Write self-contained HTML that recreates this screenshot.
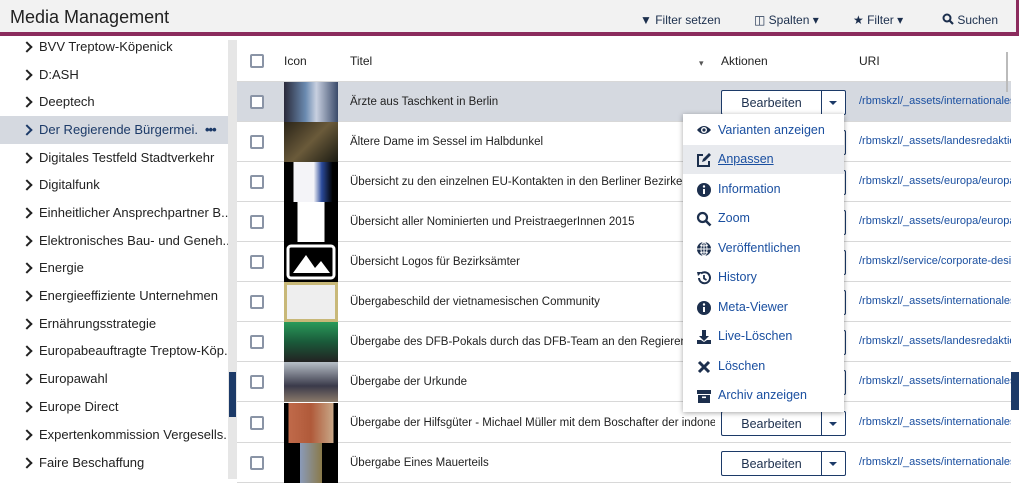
<!DOCTYPE html><html><head><meta charset="utf-8"><style>
*{box-sizing:border-box;margin:0;padding:0}
body{width:1019px;height:479px;overflow:hidden;background:#fff;font-family:"Liberation Sans",sans-serif;color:#222;position:relative}
.hdr{position:absolute;left:0;top:0;width:1019px;height:36px;background:#f2f2f2;border-bottom:4px solid #8b2b5d;border-right:3px solid #8b2b5d}
.hdr .t{position:absolute;left:10px;top:7px;font-size:18px;color:#222}
.hdr .b{position:absolute;top:13px;font-size:12px;color:#1c2f4d}
.side{position:absolute;left:0;top:40px;width:228px;height:439px;background:#fff;overflow:hidden}
.si{position:absolute;left:0;width:228px;height:28px;font-size:13px;line-height:28px;padding-left:39px;white-space:nowrap;color:#222;overflow:hidden}
.si:before{content:"";position:absolute;left:23px;top:10px;width:6px;height:6px;border-right:2px solid #222;border-top:2px solid #222;transform:rotate(45deg)}
.si.sel{background:#d5d9e0;color:#1c3a68}
.si.sel:before{border-color:#1c3a68}
.strip{position:absolute;left:228px;top:40px;width:9px;height:439px;background:#e6e6e6}
.tab{position:absolute;left:229px;top:372px;width:7px;height:45px;background:#1c3a68}
.tab2{position:absolute;left:1011px;top:372px;width:8px;height:38px;background:#1c3a68}
.row{position:absolute;left:237px;width:774px;height:40px;border-bottom:1px solid #d8d8d8;font-size:11.5px}
.cb{position:absolute;left:13px;top:13px;width:14px;height:14px;border:2px solid #8a94a6;border-radius:2px;background:#fff}
.th{position:absolute;left:47px;top:0;width:54px;height:40px;background:#000}
.tt{position:absolute;left:113px;top:11px;line-height:18px;white-space:nowrap;max-width:365px;overflow:hidden}
.btn{position:absolute;left:484px;top:8px;width:125px;height:25px;border:1px solid #1c3a68;border-radius:2px;background:#fff;font-size:12.5px}
.btn span{position:absolute;left:0;width:99px;text-align:center;top:5px;color:#1c2f4d}
.btn i{position:absolute;left:99px;top:0;height:23px;border-left:1px solid #1c3a68;width:24px}
.btn i:after{content:"";position:absolute;left:7px;top:10px;border:4px solid transparent;border-top:4px solid #1c3a68}
.uri{position:absolute;left:622px;top:13px;color:#1a4fa0;white-space:nowrap;font-size:11px;width:152px;overflow:hidden}
.menu{position:absolute;left:683px;top:114px;width:161px;height:298px;background:#fff;box-shadow:0 1px 5px rgba(0,0,0,.35)}
.mi{position:absolute;left:0;width:161px;height:29px;font-size:12.5px;color:#1a4fa0;padding-left:35px;line-height:29px}
.mi svg{position:absolute;left:13px;top:7px}
</style></head><body>
<div class="hdr"><div class="t">Media Management</div>
<div class="b" style="left:640px">▼ Filter setzen</div>
<div class="b" style="left:754px">◫ Spalten ▾</div>
<div class="b" style="left:853px">★ Filter ▾</div>
<div class="b" style="left:942px"><svg width="12" height="12" style="vertical-align:-1px"><circle cx="5" cy="5" r="3.5" fill="none" stroke="#1c2f4d" stroke-width="2"/><path d="M7.5 7.5L11 11" stroke="#1c2f4d" stroke-width="2.2"/></svg> Suchen</div></div>
<div class="side">
<div class="si" style="top:-7px">BVV Treptow-Köpenick</div>
<div class="si" style="top:21px">D:ASH</div>
<div class="si" style="top:48px">Deeptech</div>
<div class="si sel" style="top:76px"><span style="display:inline-block;width:158px;overflow:hidden;vertical-align:top">Der Regierende Bürgermei...</span><b style="position:absolute;left:205px;letter-spacing:-1px">•••</b></div>
<div class="si" style="top:104px">Digitales Testfeld Stadtverkehr</div>
<div class="si" style="top:131px">Digitalfunk</div>
<div class="si" style="top:159px">Einheitlicher Ansprechpartner B...</div>
<div class="si" style="top:187px">Elektronisches Bau- und Geneh...</div>
<div class="si" style="top:214px">Energie</div>
<div class="si" style="top:242px">Energieeffiziente Unternehmen</div>
<div class="si" style="top:270px">Ernährungsstrategie</div>
<div class="si" style="top:297px">Europabeauftragte Treptow-Köp...</div>
<div class="si" style="top:325px">Europawahl</div>
<div class="si" style="top:353px">Europe Direct</div>
<div class="si" style="top:381px">Expertenkommission Vergesells...</div>
<div class="si" style="top:409px">Faire Beschaffung</div>
</div>
<div class="strip"></div><div class="tab"></div><div class="tab2"></div>
<div class="row" style="top:41px;height:41px;font-size:12px"><div class="cb" style="top:13px"></div><div class="tt" style="left:47px">Icon</div><div class="tt">Titel</div><div class="tt" style="left:462px;font-size:9px;top:13px;color:#555">▾</div><div class="tt" style="left:484px">Aktionen</div><div class="tt" style="left:622px">URI</div></div>
<div class="row" style="top:82px;background:#d5d9e0"><div class="cb"></div><div class="th" style="background:linear-gradient(90deg,#2a2a3a,#6a8ab0 40%,#c8d0e0 60%,#3a4a6a)"></div><div class="tt">Ärzte aus Taschkent in Berlin</div><div class="btn"><span>Bearbeiten</span><i></i></div><div class="uri">/rbmskzl/_assets/internationales</div></div>
<div class="row" style="top:122px"><div class="cb"></div><div class="th" style="background:linear-gradient(135deg,#2a2418,#6a5a3a 50%,#1a1a12)"></div><div class="tt">Ältere Dame im Sessel im Halbdunkel</div><div class="btn"><span>Bearbeiten</span><i></i></div><div class="uri">/rbmskzl/_assets/landesredaktion</div></div>
<div class="row" style="top:162px"><div class="cb"></div><div class="th" style="background:linear-gradient(90deg,#000 18%,#f4f4f8 18%,#f4f4f8 55%,#2a4a9a 70%,#000 90%)"></div><div class="tt">Übersicht zu den einzelnen EU-Kontakten in den Berliner Bezirken</div><div class="btn"><span>Bearbeiten</span><i></i></div><div class="uri">/rbmskzl/_assets/europa/europa</div></div>
<div class="row" style="top:202px"><div class="cb"></div><div class="th" style="background:linear-gradient(90deg,#000 25%,#fff 25%,#fff 75%,#000 75%)"></div><div class="tt">Übersicht aller Nominierten und PreistraegerInnen 2015</div><div class="btn"><span>Bearbeiten</span><i></i></div><div class="uri">/rbmskzl/_assets/europa/europa</div></div>
<div class="row" style="top:242px"><div class="cb"></div><div class="th"><svg width="54" height="40"><rect x="4" y="4" width="46" height="32" rx="3" fill="none" stroke="#fff" stroke-width="3"/><path d="M9 31 L22 13 L31 26 L37 19 L46 31Z" fill="#fff"/></svg></div><div class="tt">Übersicht Logos für Bezirksämter</div><div class="btn"><span>Bearbeiten</span><i></i></div><div class="uri">/rbmskzl/service/corporate-desi</div></div>
<div class="row" style="top:282px"><div class="cb"></div><div class="th" style="background:#c8b878;padding:3px"><div style="background:#eee;width:100%;height:100%"></div></div><div class="tt">Übergabeschild der vietnamesischen Community</div><div class="btn"><span>Bearbeiten</span><i></i></div><div class="uri">/rbmskzl/_assets/internationales</div></div>
<div class="row" style="top:322px"><div class="cb"></div><div class="th" style="background:linear-gradient(180deg,#2a9a5a,#1a5a3a 50%,#222)"></div><div class="tt">Übergabe des DFB-Pokals durch das DFB-Team an den Regierenden</div><div class="btn"><span>Bearbeiten</span><i></i></div><div class="uri">/rbmskzl/_assets/landesredaktion</div></div>
<div class="row" style="top:362px"><div class="cb"></div><div class="th" style="background:linear-gradient(180deg,#b8c0c8,#3a3a4a 60%,#8a7a6a)"></div><div class="tt">Übergabe der Urkunde</div><div class="btn"><span>Bearbeiten</span><i></i></div><div class="uri">/rbmskzl/_assets/internationales</div></div>
<div class="row" style="top:403px"><div class="cb"></div><div class="th" style="background:linear-gradient(90deg,#000 8%,#c06a4a 8%,#b05a3a 50%,#c8a888 92%,#000 92%)"></div><div class="tt">Übergabe der Hilfsgüter - Michael Müller mit dem Boschafter der indone</div><div class="btn"><span>Bearbeiten</span><i></i></div><div class="uri">/rbmskzl/_assets/internationales</div></div>
<div class="row" style="top:443px"><div class="cb"></div><div class="th" style="background:linear-gradient(90deg,#000 30%,#8a9ab8 30%,#8a7a4a 70%,#000 70%)"></div><div class="tt">Übergabe Eines Mauerteils</div><div class="btn"><span>Bearbeiten</span><i></i></div><div class="uri">/rbmskzl/_assets/internationales</div></div>
<div class="menu">
<div class="mi" style="top:2px"><svg width="16" height="14" viewBox="0 0 16 14"><path d="M1 7Q8 -1 15 7Q8 15 1 7Z" fill="#1c2f4d"/><circle cx="8" cy="7" r="3" fill="#fff"/><circle cx="8" cy="7" r="1.6" fill="#1c2f4d"/></svg>Varianten anzeigen</div>
<div class="mi" style="top:31px;background:#e8eaee;text-decoration:underline"><svg width="16" height="16" viewBox="0 0 16 16"><path d="M7 3H2V14H13V9" fill="none" stroke="#1c2f4d" stroke-width="2"/><path d="M6 10L7 7 13 1 15 3 9 9Z" fill="#1c2f4d"/></svg>Anpassen</div>
<div class="mi" style="top:61px"><svg width="16" height="16"><circle cx="8" cy="8" r="7" fill="#1c2f4d"/><rect x="7" y="7" width="2" height="5" fill="#fff"/><circle cx="8" cy="4.5" r="1.2" fill="#fff"/></svg>Information</div>
<div class="mi" style="top:90px"><svg width="16" height="16"><circle cx="6.5" cy="6.5" r="4.5" fill="none" stroke="#1c2f4d" stroke-width="2.2"/><path d="M10 10L14.5 14.5" stroke="#1c2f4d" stroke-width="2.6"/></svg>Zoom</div>
<div class="mi" style="top:120px"><svg width="16" height="16"><circle cx="8" cy="8" r="7" fill="#1c2f4d"/><path d="M1 8H15M8 1V15M4 4Q8 6 12 4M4 12Q8 10 12 12" stroke="#fff" stroke-width="1" fill="none"/><ellipse cx="8" cy="8" rx="3" ry="7" fill="none" stroke="#fff"/></svg>Veröffentlichen</div>
<div class="mi" style="top:149px"><svg width="16" height="16"><path d="M3 8A5.5 5.5 0 1 0 5 3.5" fill="none" stroke="#1c2f4d" stroke-width="2"/><path d="M1 2L6 2 2 6Z" fill="#1c2f4d"/><path d="M8 5V8.5L10.5 10" stroke="#1c2f4d" stroke-width="1.8" fill="none"/></svg>History</div>
<div class="mi" style="top:179px"><svg width="16" height="16"><circle cx="8" cy="8" r="7" fill="#1c2f4d"/><rect x="7" y="7" width="2" height="5" fill="#fff"/><circle cx="8" cy="4.5" r="1.2" fill="#fff"/></svg>Meta-Viewer</div>
<div class="mi" style="top:208px"><svg width="16" height="16"><path d="M6 1H10V7H13L8 12 3 7H6Z" fill="#1c2f4d"/><path d="M1 11H5L8 13 11 11H15V15H1Z" fill="#1c2f4d"/></svg>Live-Löschen</div>
<div class="mi" style="top:238px"><svg width="16" height="16"><path d="M3 3L13 13M13 3L3 13" stroke="#1c2f4d" stroke-width="3"/></svg>Löschen</div>
<div class="mi" style="top:267px"><svg width="16" height="16"><rect x="1" y="2" width="14" height="4" fill="#1c2f4d"/><path d="M2 7H14V15H2Z" fill="#1c2f4d"/><rect x="6" y="8.5" width="4" height="1.6" fill="#fff"/></svg>Archiv anzeigen</div>
</div>
<div style="position:absolute;left:1006px;top:52px;width:2px;height:40px;background:#bbb"></div>
</body></html>
